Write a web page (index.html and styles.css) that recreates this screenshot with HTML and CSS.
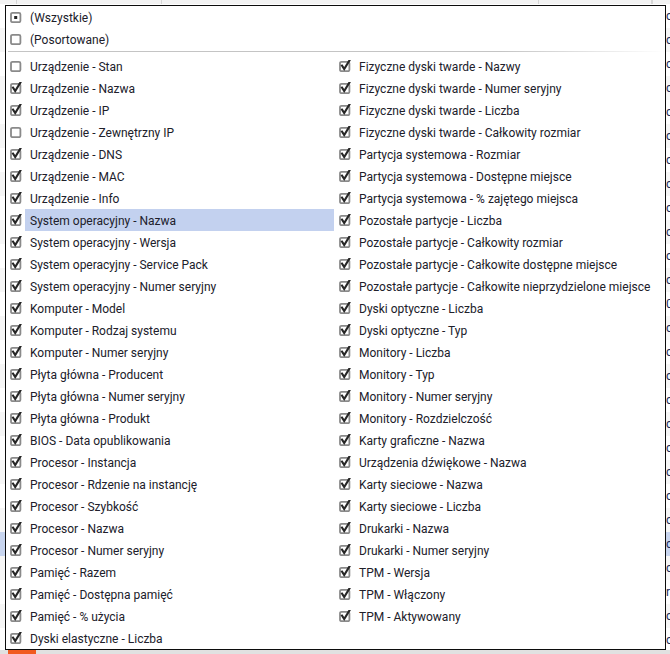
FILE: index.html
```html
<!DOCTYPE html>
<html lang="pl">
<head>
<meta charset="utf-8">
<title>Filtr kolumn</title>
<link rel="stylesheet" href="styles.css">
</head>
<body>
<svg class="defs" width="0" height="0" aria-hidden="true">
  <defs>
    <symbol id="box" viewBox="0 0 12 12">
      <rect x="1" y="1.8" width="9.4" height="9.4" rx="1.5" fill="#fff" stroke="#8a8a8a" stroke-width="1.8"/>
    </symbol>
    <symbol id="chk" viewBox="0 0 12 12">
      <rect x="1" y="1.8" width="9.4" height="9.4" rx="1.5" fill="#fff" stroke="#8a8a8a" stroke-width="1.8"/>
      <path d="M3 5.6 L5.2 9 L10.4 0.5" fill="none" stroke="#262626" stroke-width="2.1" stroke-linecap="square"/>
    </symbol>
    <symbol id="tri" viewBox="0 0 12 12">
      <rect x="1" y="1.8" width="9.4" height="9.4" rx="1.5" fill="#fff" stroke="#8a8a8a" stroke-width="1.8"/>
      <rect x="4.2" y="5" width="3" height="3" fill="#262626"/>
    </symbol>
  </defs>
</svg>

<div class="bg">
  <div class="bg-head">
    <span class="hcell w17"></span><span class="hcell w145"></span><span class="hcell w377"></span><span class="hcell w113"></span><span class="hcell"></span>
  </div>
  <div class="bg-rows">
    <div class="bg-row">ce</div><div class="bg-row">ce</div><div class="bg-row">ce</div><div class="bg-row">ce</div>
    <div class="bg-row">ce</div><div class="bg-row">ce</div><div class="bg-row">ce</div><div class="bg-row">ce</div>
    <div class="bg-row">ce</div><div class="bg-row">ce</div><div class="bg-row">ce</div><div class="bg-row">ce</div>
    <div class="bg-row">0</div><div class="bg-row">ce</div><div class="bg-row">ce</div><div class="bg-row">ce</div>
    <div class="bg-row">ce</div><div class="bg-row">ce</div><div class="bg-row">ce</div><div class="bg-row">ce</div>
    <div class="bg-row">ce</div><div class="bg-row">ce</div><div class="bg-row sel">ce</div><div class="bg-row">ce</div>
    <div class="bg-row">r</div><div class="bg-row">ce</div><div class="bg-row">ce</div>
  </div>
  <div class="bg-foot"><span class="orange"></span></div>
</div>

<div class="popup">
  <div class="item"><span class="cb"><svg><use href="#tri"/></svg></span><span class="lbl">(Wszystkie)</span></div>
  <div class="item"><span class="cb"><svg><use href="#box"/></svg></span><span class="lbl">(Posortowane)</span></div>
  <div class="sep"></div>
  <div class="cols">
    <div class="col left">
      <div class="item"><span class="cb"><svg><use href="#box"/></svg></span><span class="lbl">Urządzenie - Stan</span></div>
      <div class="item"><span class="cb"><svg><use href="#chk"/></svg></span><span class="lbl">Urządzenie - Nazwa</span></div>
      <div class="item"><span class="cb"><svg><use href="#chk"/></svg></span><span class="lbl">Urządzenie - IP</span></div>
      <div class="item"><span class="cb"><svg><use href="#box"/></svg></span><span class="lbl">Urządzenie - Zewnętrzny IP</span></div>
      <div class="item"><span class="cb"><svg><use href="#chk"/></svg></span><span class="lbl">Urządzenie - DNS</span></div>
      <div class="item"><span class="cb"><svg><use href="#chk"/></svg></span><span class="lbl">Urządzenie - MAC</span></div>
      <div class="item"><span class="cb"><svg><use href="#chk"/></svg></span><span class="lbl">Urządzenie - Info</span></div>
      <div class="item active"><span class="cb"><svg><use href="#chk"/></svg></span><span class="lbl">System operacyjny - Nazwa</span></div>
      <div class="item"><span class="cb"><svg><use href="#chk"/></svg></span><span class="lbl">System operacyjny - Wersja</span></div>
      <div class="item"><span class="cb"><svg><use href="#chk"/></svg></span><span class="lbl">System operacyjny - Service Pack</span></div>
      <div class="item"><span class="cb"><svg><use href="#chk"/></svg></span><span class="lbl">System operacyjny - Numer seryjny</span></div>
      <div class="item"><span class="cb"><svg><use href="#chk"/></svg></span><span class="lbl">Komputer - Model</span></div>
      <div class="item"><span class="cb"><svg><use href="#chk"/></svg></span><span class="lbl">Komputer - Rodzaj systemu</span></div>
      <div class="item"><span class="cb"><svg><use href="#chk"/></svg></span><span class="lbl">Komputer - Numer seryjny</span></div>
      <div class="item"><span class="cb"><svg><use href="#chk"/></svg></span><span class="lbl">Płyta główna - Producent</span></div>
      <div class="item"><span class="cb"><svg><use href="#chk"/></svg></span><span class="lbl">Płyta główna - Numer seryjny</span></div>
      <div class="item"><span class="cb"><svg><use href="#chk"/></svg></span><span class="lbl">Płyta główna - Produkt</span></div>
      <div class="item"><span class="cb"><svg><use href="#chk"/></svg></span><span class="lbl">BIOS - Data opublikowania</span></div>
      <div class="item"><span class="cb"><svg><use href="#chk"/></svg></span><span class="lbl">Procesor - Instancja</span></div>
      <div class="item"><span class="cb"><svg><use href="#chk"/></svg></span><span class="lbl">Procesor - Rdzenie na instancję</span></div>
      <div class="item"><span class="cb"><svg><use href="#chk"/></svg></span><span class="lbl">Procesor - Szybkość</span></div>
      <div class="item"><span class="cb"><svg><use href="#chk"/></svg></span><span class="lbl">Procesor - Nazwa</span></div>
      <div class="item"><span class="cb"><svg><use href="#chk"/></svg></span><span class="lbl">Procesor - Numer seryjny</span></div>
      <div class="item"><span class="cb"><svg><use href="#chk"/></svg></span><span class="lbl">Pamięć - Razem</span></div>
      <div class="item"><span class="cb"><svg><use href="#chk"/></svg></span><span class="lbl">Pamięć - Dostępna pamięć</span></div>
      <div class="item"><span class="cb"><svg><use href="#chk"/></svg></span><span class="lbl">Pamięć - % użycia</span></div>
      <div class="item"><span class="cb"><svg><use href="#chk"/></svg></span><span class="lbl">Dyski elastyczne - Liczba</span></div>
    </div>
    <div class="col right">
      <div class="item"><span class="cb"><svg><use href="#chk"/></svg></span><span class="lbl">Fizyczne dyski twarde - Nazwy</span></div>
      <div class="item"><span class="cb"><svg><use href="#chk"/></svg></span><span class="lbl">Fizyczne dyski twarde - Numer seryjny</span></div>
      <div class="item"><span class="cb"><svg><use href="#chk"/></svg></span><span class="lbl">Fizyczne dyski twarde - Liczba</span></div>
      <div class="item"><span class="cb"><svg><use href="#chk"/></svg></span><span class="lbl">Fizyczne dyski twarde - Całkowity rozmiar</span></div>
      <div class="item"><span class="cb"><svg><use href="#chk"/></svg></span><span class="lbl">Partycja systemowa - Rozmiar</span></div>
      <div class="item"><span class="cb"><svg><use href="#chk"/></svg></span><span class="lbl">Partycja systemowa - Dostępne miejsce</span></div>
      <div class="item"><span class="cb"><svg><use href="#chk"/></svg></span><span class="lbl">Partycja systemowa - % zajętego miejsca</span></div>
      <div class="item"><span class="cb"><svg><use href="#chk"/></svg></span><span class="lbl">Pozostałe partycje - Liczba</span></div>
      <div class="item"><span class="cb"><svg><use href="#chk"/></svg></span><span class="lbl">Pozostałe partycje - Całkowity rozmiar</span></div>
      <div class="item"><span class="cb"><svg><use href="#chk"/></svg></span><span class="lbl">Pozostałe partycje - Całkowite dostępne miejsce</span></div>
      <div class="item"><span class="cb"><svg><use href="#chk"/></svg></span><span class="lbl">Pozostałe partycje - Całkowite nieprzydzielone miejsce</span></div>
      <div class="item"><span class="cb"><svg><use href="#chk"/></svg></span><span class="lbl">Dyski optyczne - Liczba</span></div>
      <div class="item"><span class="cb"><svg><use href="#chk"/></svg></span><span class="lbl">Dyski optyczne - Typ</span></div>
      <div class="item"><span class="cb"><svg><use href="#chk"/></svg></span><span class="lbl">Monitory - Liczba</span></div>
      <div class="item"><span class="cb"><svg><use href="#chk"/></svg></span><span class="lbl">Monitory - Typ</span></div>
      <div class="item"><span class="cb"><svg><use href="#chk"/></svg></span><span class="lbl">Monitory - Numer seryjny</span></div>
      <div class="item"><span class="cb"><svg><use href="#chk"/></svg></span><span class="lbl">Monitory - Rozdzielczość</span></div>
      <div class="item"><span class="cb"><svg><use href="#chk"/></svg></span><span class="lbl">Karty graficzne - Nazwa</span></div>
      <div class="item"><span class="cb"><svg><use href="#chk"/></svg></span><span class="lbl">Urządzenia dźwiękowe - Nazwa</span></div>
      <div class="item"><span class="cb"><svg><use href="#chk"/></svg></span><span class="lbl">Karty sieciowe - Nazwa</span></div>
      <div class="item"><span class="cb"><svg><use href="#chk"/></svg></span><span class="lbl">Karty sieciowe - Liczba</span></div>
      <div class="item"><span class="cb"><svg><use href="#chk"/></svg></span><span class="lbl">Drukarki - Nazwa</span></div>
      <div class="item"><span class="cb"><svg><use href="#chk"/></svg></span><span class="lbl">Drukarki - Numer seryjny</span></div>
      <div class="item"><span class="cb"><svg><use href="#chk"/></svg></span><span class="lbl">TPM - Wersja</span></div>
      <div class="item"><span class="cb"><svg><use href="#chk"/></svg></span><span class="lbl">TPM - Włączony</span></div>
      <div class="item"><span class="cb"><svg><use href="#chk"/></svg></span><span class="lbl">TPM - Aktywowany</span></div>
    </div>
  </div>
</div>
</body>
</html>
```

FILE: styles.css
```css
* { box-sizing: border-box; }

html, body {
  margin: 0;
  padding: 0;
}

body {
  width: 670px;
  height: 654px;
  overflow: hidden;
  position: relative;
  font-family: Roboto, "Liberation Sans", Arial, sans-serif;
  font-size: 12px;
  color: #20202a;
  background: #fff;
}

.defs {
  position: absolute;
  width: 0;
  height: 0;
  overflow: hidden;
}

/* ---------- background grid ---------- */
.bg {
  width: 670px;
  height: 654px;
  display: flex;
  flex-direction: column;
}

.bg-head {
  height: 4px;
  flex: none;
  display: flex;
  background: #f3f3f3;
}

.hcell {
  border-right: 1px solid #d6d6d6;
  height: 100%;
}
.hcell.w17 { width: 17px; }
.hcell.w145 { width: 145px; }
.hcell.w377 { width: 377px; }
.hcell.w113 { width: 113px; }

.bg-rows {
  flex: 1;
  overflow: hidden;
}

.bg-row {
  height: 24px;
  line-height: 24px;
  padding-left: 666px;
  white-space: nowrap;
  overflow: hidden;
  color: #1c2a5a;
  font-size: 12px;
}
.bg-row:nth-child(even) { background: #f6f6f6; }
.bg-row.sel { background: #c8d5ef; }

.bg-foot {
  height: 4px;
  flex: none;
  background: #e1e1e1;
  display: flex;
}

.orange {
  width: 28px;
  margin-left: 8px;
  background: #f15a1f;
}

/* ---------- popup ---------- */
.popup {
  position: absolute;
  left: 5px;
  top: 5px;
  width: 661px;
  height: 645px;
  border: 1px solid #0c0c0c;
  background: #fff;
  overflow: hidden;
}

.item {
  height: 22px;
  display: flex;
  align-items: center;
  white-space: nowrap;
}

.cb {
  width: 19px;
  height: 22px;
  flex: none;
  display: flex;
  align-items: center;
  padding-left: 4px;
}

.cb svg {
  width: 12px;
  height: 12px;
  display: block;
}

.lbl {
  flex: 1;
  height: 22px;
  line-height: 22px;
  padding-top: 1px;
  padding-left: 5px;
}

.item.active .lbl {
  background: #c3d1ef;
}

.sep {
  height: 5px;
  padding-top: 1px;
  margin-left: 2px;
}
.sep::after {
  content: "";
  display: block;
  height: 1px;
  background: linear-gradient(to right, #c4c4c4 0%, #c4c4c4 75%, rgba(196,196,196,0) 100%);
}

.cols {
  display: grid;
  grid-template-columns: 329px 1fr;
}

.col.left .item { margin-right: 1px; }
```
